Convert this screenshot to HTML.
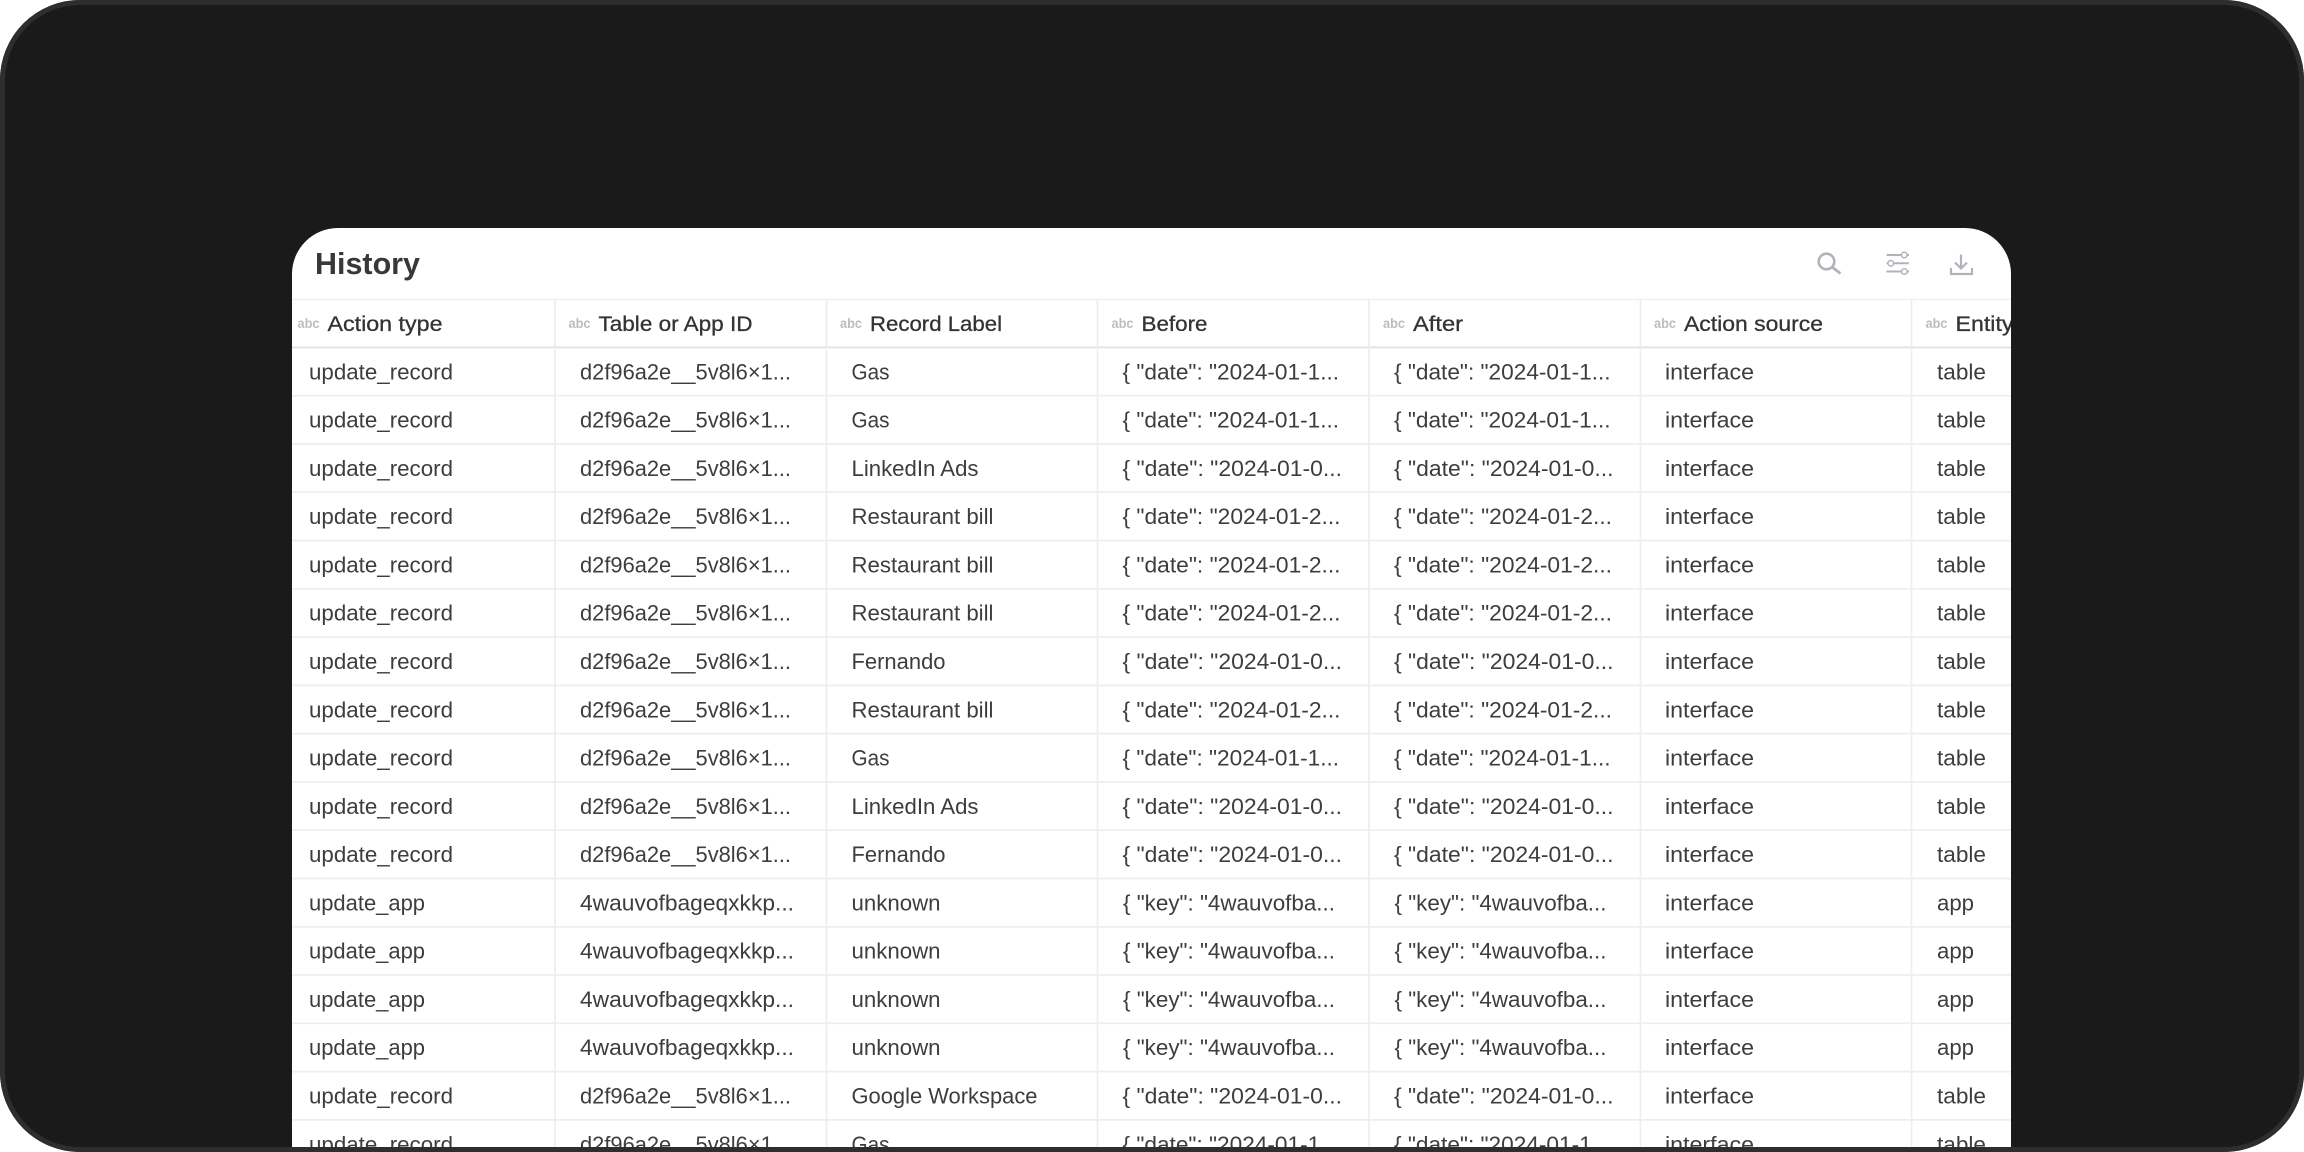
<!DOCTYPE html>
<html><head><meta charset="utf-8"><title>History</title>
<style>
html,body{margin:0;padding:0;width:2304px;height:1152px;overflow:hidden;background:#fff}
#frame{position:absolute;left:0;top:0;width:2304px;height:1152px;box-sizing:border-box;background:#1a1a1a;border-radius:80px}
#card{position:absolute;left:292px;top:228px;width:1719px;height:924px;background:#fff;border-radius:46px 46px 0 0;overflow:hidden}
#card svg{position:absolute;left:-292px;top:-228px;filter:blur(.3px)}
#border{position:absolute;left:0;top:0;width:2304px;height:1152px;box-sizing:border-box;border:5px solid #2e2e2e;border-radius:80px;pointer-events:none}
text{font-family:"Liberation Sans",sans-serif;white-space:pre}
.c text{font-size:22px;fill:#3d3d3d}
.h text{font-size:21.5px;fill:#333;stroke:#333;stroke-width:.3px}
.h text.a{font-size:13.5px;font-weight:700;fill:#bdbdbd;stroke:none}
.t{font-size:30.5px;font-weight:700;fill:#383838}
.l{fill:none}
.i{stroke:#b0b4ba;fill:none}
</style></head><body>
<div id="frame"></div>
<div id="card">
<svg width="2304" height="1152" viewBox="0 0 2304 1152" xmlns="http://www.w3.org/2000/svg">
<text class="t" x="315" y="274" textLength="105" lengthAdjust="spacingAndGlyphs">History</text>
<circle class="i" cx="1826.5" cy="261.5" r="7.8" stroke-width="2.6"/>
<path class="i" d="M1832 267L1840.5 273.5" stroke-width="2.8"/>
<path class="i" stroke-width="2" d="M1886.5 255H1901M1907.5 255H1909M1886.5 263.3H1888M1894 263.3H1909M1886.5 271.5H1901M1907.5 271.5H1909"/>
<circle class="i" cx="1904.3" cy="255" r="2.8" stroke-width="1.5"/><circle class="i" cx="1890.8" cy="263.3" r="2.8" stroke-width="1.5"/><circle class="i" cx="1904.3" cy="271.5" r="2.8" stroke-width="1.5"/>
<path class="i" stroke-width="2.2" d="M1961 254.5V268.5M1955 262.5L1961 268.5L1967 262.5M1951 268V274H1972V268"/>
<g class="l" transform="translate(0,.4)">
<path d="M292 299H2011" stroke="#f0f0f0" stroke-width="1.6"/>
<path d="M292 347H2011" stroke="#e3e3e3" stroke-width="2"/>
<path stroke="#eeeeee" stroke-width="1.7" d="M292 395.3H2011M292 443.6H2011M292 491.8H2011M292 540.1H2011M292 588.4H2011M292 636.7H2011M292 685H2011M292 733.2H2011M292 781.5H2011M292 829.8H2011M292 878.1H2011M292 926.4H2011M292 974.6H2011M292 1022.9H2011M292 1071.2H2011M292 1119.5H2011"/>
<path stroke="#eeeeee" stroke-width="1.7" d="M555 299V1152M826.5 299V1152M1097.5 299V1152M1369 299V1152M1640.5 299V1152M1911.5 299V1152"/>
</g>
<g class="h">
<text class="a" x="297.5" y="328" textLength="22" lengthAdjust="spacingAndGlyphs">abc</text><text x="327.5" y="331" textLength="115" lengthAdjust="spacingAndGlyphs">Action type</text>
<text class="a" x="568.5" y="328" textLength="22" lengthAdjust="spacingAndGlyphs">abc</text><text x="598.5" y="331" textLength="154" lengthAdjust="spacingAndGlyphs">Table or App ID</text>
<text class="a" x="840" y="328" textLength="22" lengthAdjust="spacingAndGlyphs">abc</text><text x="870" y="331" textLength="132" lengthAdjust="spacingAndGlyphs">Record Label</text>
<text class="a" x="1111.5" y="328" textLength="22" lengthAdjust="spacingAndGlyphs">abc</text><text x="1141.5" y="331" textLength="66" lengthAdjust="spacingAndGlyphs">Before</text>
<text class="a" x="1383" y="328" textLength="22" lengthAdjust="spacingAndGlyphs">abc</text><text x="1413" y="331" textLength="50" lengthAdjust="spacingAndGlyphs">After</text>
<text class="a" x="1654" y="328" textLength="22" lengthAdjust="spacingAndGlyphs">abc</text><text x="1684" y="331" textLength="139" lengthAdjust="spacingAndGlyphs">Action source</text>
<text class="a" x="1925.5" y="328" textLength="22" lengthAdjust="spacingAndGlyphs">abc</text><text x="1955.5" y="331" textLength="58" lengthAdjust="spacingAndGlyphs">Entity</text>
</g>
<g class="c" transform="translate(0,379.3)">
<text x="309" textLength="144" lengthAdjust="spacingAndGlyphs">update_record</text><text x="580" textLength="211" lengthAdjust="spacingAndGlyphs">d2f96a2e__5v8l6×1...</text><text x="851.5" textLength="38" lengthAdjust="spacingAndGlyphs">Gas</text><text x="1122.5" textLength="216.6" lengthAdjust="spacingAndGlyphs">{ "date": "2024-01-1...</text><text x="1394" textLength="216.6" lengthAdjust="spacingAndGlyphs">{ "date": "2024-01-1...</text><text x="1665" textLength="89" lengthAdjust="spacingAndGlyphs">interface</text><text x="1937" textLength="49" lengthAdjust="spacingAndGlyphs">table</text>
</g>
<g class="c" transform="translate(0,427.6)">
<text x="309" textLength="144" lengthAdjust="spacingAndGlyphs">update_record</text><text x="580" textLength="211" lengthAdjust="spacingAndGlyphs">d2f96a2e__5v8l6×1...</text><text x="851.5" textLength="38" lengthAdjust="spacingAndGlyphs">Gas</text><text x="1122.5" textLength="216.6" lengthAdjust="spacingAndGlyphs">{ "date": "2024-01-1...</text><text x="1394" textLength="216.6" lengthAdjust="spacingAndGlyphs">{ "date": "2024-01-1...</text><text x="1665" textLength="89" lengthAdjust="spacingAndGlyphs">interface</text><text x="1937" textLength="49" lengthAdjust="spacingAndGlyphs">table</text>
</g>
<g class="c" transform="translate(0,475.9)">
<text x="309" textLength="144" lengthAdjust="spacingAndGlyphs">update_record</text><text x="580" textLength="211" lengthAdjust="spacingAndGlyphs">d2f96a2e__5v8l6×1...</text><text x="851.5" textLength="127" lengthAdjust="spacingAndGlyphs">LinkedIn Ads</text><text x="1122.5" textLength="219.5" lengthAdjust="spacingAndGlyphs">{ "date": "2024-01-0...</text><text x="1394" textLength="219.5" lengthAdjust="spacingAndGlyphs">{ "date": "2024-01-0...</text><text x="1665" textLength="89" lengthAdjust="spacingAndGlyphs">interface</text><text x="1937" textLength="49" lengthAdjust="spacingAndGlyphs">table</text>
</g>
<g class="c" transform="translate(0,524.1)">
<text x="309" textLength="144" lengthAdjust="spacingAndGlyphs">update_record</text><text x="580" textLength="211" lengthAdjust="spacingAndGlyphs">d2f96a2e__5v8l6×1...</text><text x="851.5" textLength="142" lengthAdjust="spacingAndGlyphs">Restaurant bill</text><text x="1122.5" textLength="218" lengthAdjust="spacingAndGlyphs">{ "date": "2024-01-2...</text><text x="1394" textLength="218" lengthAdjust="spacingAndGlyphs">{ "date": "2024-01-2...</text><text x="1665" textLength="89" lengthAdjust="spacingAndGlyphs">interface</text><text x="1937" textLength="49" lengthAdjust="spacingAndGlyphs">table</text>
</g>
<g class="c" transform="translate(0,572.4)">
<text x="309" textLength="144" lengthAdjust="spacingAndGlyphs">update_record</text><text x="580" textLength="211" lengthAdjust="spacingAndGlyphs">d2f96a2e__5v8l6×1...</text><text x="851.5" textLength="142" lengthAdjust="spacingAndGlyphs">Restaurant bill</text><text x="1122.5" textLength="218" lengthAdjust="spacingAndGlyphs">{ "date": "2024-01-2...</text><text x="1394" textLength="218" lengthAdjust="spacingAndGlyphs">{ "date": "2024-01-2...</text><text x="1665" textLength="89" lengthAdjust="spacingAndGlyphs">interface</text><text x="1937" textLength="49" lengthAdjust="spacingAndGlyphs">table</text>
</g>
<g class="c" transform="translate(0,620.7)">
<text x="309" textLength="144" lengthAdjust="spacingAndGlyphs">update_record</text><text x="580" textLength="211" lengthAdjust="spacingAndGlyphs">d2f96a2e__5v8l6×1...</text><text x="851.5" textLength="142" lengthAdjust="spacingAndGlyphs">Restaurant bill</text><text x="1122.5" textLength="218" lengthAdjust="spacingAndGlyphs">{ "date": "2024-01-2...</text><text x="1394" textLength="218" lengthAdjust="spacingAndGlyphs">{ "date": "2024-01-2...</text><text x="1665" textLength="89" lengthAdjust="spacingAndGlyphs">interface</text><text x="1937" textLength="49" lengthAdjust="spacingAndGlyphs">table</text>
</g>
<g class="c" transform="translate(0,669)">
<text x="309" textLength="144" lengthAdjust="spacingAndGlyphs">update_record</text><text x="580" textLength="211" lengthAdjust="spacingAndGlyphs">d2f96a2e__5v8l6×1...</text><text x="851.5" textLength="94" lengthAdjust="spacingAndGlyphs">Fernando</text><text x="1122.5" textLength="219.5" lengthAdjust="spacingAndGlyphs">{ "date": "2024-01-0...</text><text x="1394" textLength="219.5" lengthAdjust="spacingAndGlyphs">{ "date": "2024-01-0...</text><text x="1665" textLength="89" lengthAdjust="spacingAndGlyphs">interface</text><text x="1937" textLength="49" lengthAdjust="spacingAndGlyphs">table</text>
</g>
<g class="c" transform="translate(0,717.3)">
<text x="309" textLength="144" lengthAdjust="spacingAndGlyphs">update_record</text><text x="580" textLength="211" lengthAdjust="spacingAndGlyphs">d2f96a2e__5v8l6×1...</text><text x="851.5" textLength="142" lengthAdjust="spacingAndGlyphs">Restaurant bill</text><text x="1122.5" textLength="218" lengthAdjust="spacingAndGlyphs">{ "date": "2024-01-2...</text><text x="1394" textLength="218" lengthAdjust="spacingAndGlyphs">{ "date": "2024-01-2...</text><text x="1665" textLength="89" lengthAdjust="spacingAndGlyphs">interface</text><text x="1937" textLength="49" lengthAdjust="spacingAndGlyphs">table</text>
</g>
<g class="c" transform="translate(0,765.5)">
<text x="309" textLength="144" lengthAdjust="spacingAndGlyphs">update_record</text><text x="580" textLength="211" lengthAdjust="spacingAndGlyphs">d2f96a2e__5v8l6×1...</text><text x="851.5" textLength="38" lengthAdjust="spacingAndGlyphs">Gas</text><text x="1122.5" textLength="216.6" lengthAdjust="spacingAndGlyphs">{ "date": "2024-01-1...</text><text x="1394" textLength="216.6" lengthAdjust="spacingAndGlyphs">{ "date": "2024-01-1...</text><text x="1665" textLength="89" lengthAdjust="spacingAndGlyphs">interface</text><text x="1937" textLength="49" lengthAdjust="spacingAndGlyphs">table</text>
</g>
<g class="c" transform="translate(0,813.8)">
<text x="309" textLength="144" lengthAdjust="spacingAndGlyphs">update_record</text><text x="580" textLength="211" lengthAdjust="spacingAndGlyphs">d2f96a2e__5v8l6×1...</text><text x="851.5" textLength="127" lengthAdjust="spacingAndGlyphs">LinkedIn Ads</text><text x="1122.5" textLength="219.5" lengthAdjust="spacingAndGlyphs">{ "date": "2024-01-0...</text><text x="1394" textLength="219.5" lengthAdjust="spacingAndGlyphs">{ "date": "2024-01-0...</text><text x="1665" textLength="89" lengthAdjust="spacingAndGlyphs">interface</text><text x="1937" textLength="49" lengthAdjust="spacingAndGlyphs">table</text>
</g>
<g class="c" transform="translate(0,862.1)">
<text x="309" textLength="144" lengthAdjust="spacingAndGlyphs">update_record</text><text x="580" textLength="211" lengthAdjust="spacingAndGlyphs">d2f96a2e__5v8l6×1...</text><text x="851.5" textLength="94" lengthAdjust="spacingAndGlyphs">Fernando</text><text x="1122.5" textLength="219.5" lengthAdjust="spacingAndGlyphs">{ "date": "2024-01-0...</text><text x="1394" textLength="219.5" lengthAdjust="spacingAndGlyphs">{ "date": "2024-01-0...</text><text x="1665" textLength="89" lengthAdjust="spacingAndGlyphs">interface</text><text x="1937" textLength="49" lengthAdjust="spacingAndGlyphs">table</text>
</g>
<g class="c" transform="translate(0,910.4)">
<text x="309" textLength="116" lengthAdjust="spacingAndGlyphs">update_app</text><text x="580" textLength="214" lengthAdjust="spacingAndGlyphs">4wauvofbageqxkkp...</text><text x="851.5" textLength="89" lengthAdjust="spacingAndGlyphs">unknown</text><text x="1123" textLength="212" lengthAdjust="spacingAndGlyphs">{ "key": "4wauvofba...</text><text x="1394.5" textLength="212" lengthAdjust="spacingAndGlyphs">{ "key": "4wauvofba...</text><text x="1665" textLength="89" lengthAdjust="spacingAndGlyphs">interface</text><text x="1937" textLength="37" lengthAdjust="spacingAndGlyphs">app</text>
</g>
<g class="c" transform="translate(0,958.7)">
<text x="309" textLength="116" lengthAdjust="spacingAndGlyphs">update_app</text><text x="580" textLength="214" lengthAdjust="spacingAndGlyphs">4wauvofbageqxkkp...</text><text x="851.5" textLength="89" lengthAdjust="spacingAndGlyphs">unknown</text><text x="1123" textLength="212" lengthAdjust="spacingAndGlyphs">{ "key": "4wauvofba...</text><text x="1394.5" textLength="212" lengthAdjust="spacingAndGlyphs">{ "key": "4wauvofba...</text><text x="1665" textLength="89" lengthAdjust="spacingAndGlyphs">interface</text><text x="1937" textLength="37" lengthAdjust="spacingAndGlyphs">app</text>
</g>
<g class="c" transform="translate(0,1006.9)">
<text x="309" textLength="116" lengthAdjust="spacingAndGlyphs">update_app</text><text x="580" textLength="214" lengthAdjust="spacingAndGlyphs">4wauvofbageqxkkp...</text><text x="851.5" textLength="89" lengthAdjust="spacingAndGlyphs">unknown</text><text x="1123" textLength="212" lengthAdjust="spacingAndGlyphs">{ "key": "4wauvofba...</text><text x="1394.5" textLength="212" lengthAdjust="spacingAndGlyphs">{ "key": "4wauvofba...</text><text x="1665" textLength="89" lengthAdjust="spacingAndGlyphs">interface</text><text x="1937" textLength="37" lengthAdjust="spacingAndGlyphs">app</text>
</g>
<g class="c" transform="translate(0,1055.2)">
<text x="309" textLength="116" lengthAdjust="spacingAndGlyphs">update_app</text><text x="580" textLength="214" lengthAdjust="spacingAndGlyphs">4wauvofbageqxkkp...</text><text x="851.5" textLength="89" lengthAdjust="spacingAndGlyphs">unknown</text><text x="1123" textLength="212" lengthAdjust="spacingAndGlyphs">{ "key": "4wauvofba...</text><text x="1394.5" textLength="212" lengthAdjust="spacingAndGlyphs">{ "key": "4wauvofba...</text><text x="1665" textLength="89" lengthAdjust="spacingAndGlyphs">interface</text><text x="1937" textLength="37" lengthAdjust="spacingAndGlyphs">app</text>
</g>
<g class="c" transform="translate(0,1103.5)">
<text x="309" textLength="144" lengthAdjust="spacingAndGlyphs">update_record</text><text x="580" textLength="211" lengthAdjust="spacingAndGlyphs">d2f96a2e__5v8l6×1...</text><text x="851.5" textLength="186" lengthAdjust="spacingAndGlyphs">Google Workspace</text><text x="1122.5" textLength="219.5" lengthAdjust="spacingAndGlyphs">{ "date": "2024-01-0...</text><text x="1394" textLength="219.5" lengthAdjust="spacingAndGlyphs">{ "date": "2024-01-0...</text><text x="1665" textLength="89" lengthAdjust="spacingAndGlyphs">interface</text><text x="1937" textLength="49" lengthAdjust="spacingAndGlyphs">table</text>
</g>
<g class="c" transform="translate(0,1151.8)">
<text x="309" textLength="144" lengthAdjust="spacingAndGlyphs">update_record</text><text x="580" textLength="211" lengthAdjust="spacingAndGlyphs">d2f96a2e__5v8l6×1...</text><text x="851.5" textLength="38" lengthAdjust="spacingAndGlyphs">Gas</text><text x="1122.5" textLength="216.6" lengthAdjust="spacingAndGlyphs">{ "date": "2024-01-1...</text><text x="1394" textLength="216.6" lengthAdjust="spacingAndGlyphs">{ "date": "2024-01-1...</text><text x="1665" textLength="89" lengthAdjust="spacingAndGlyphs">interface</text><text x="1937" textLength="49" lengthAdjust="spacingAndGlyphs">table</text>
</g>
</svg>
</div>
<div id="border"></div>
</body></html>
